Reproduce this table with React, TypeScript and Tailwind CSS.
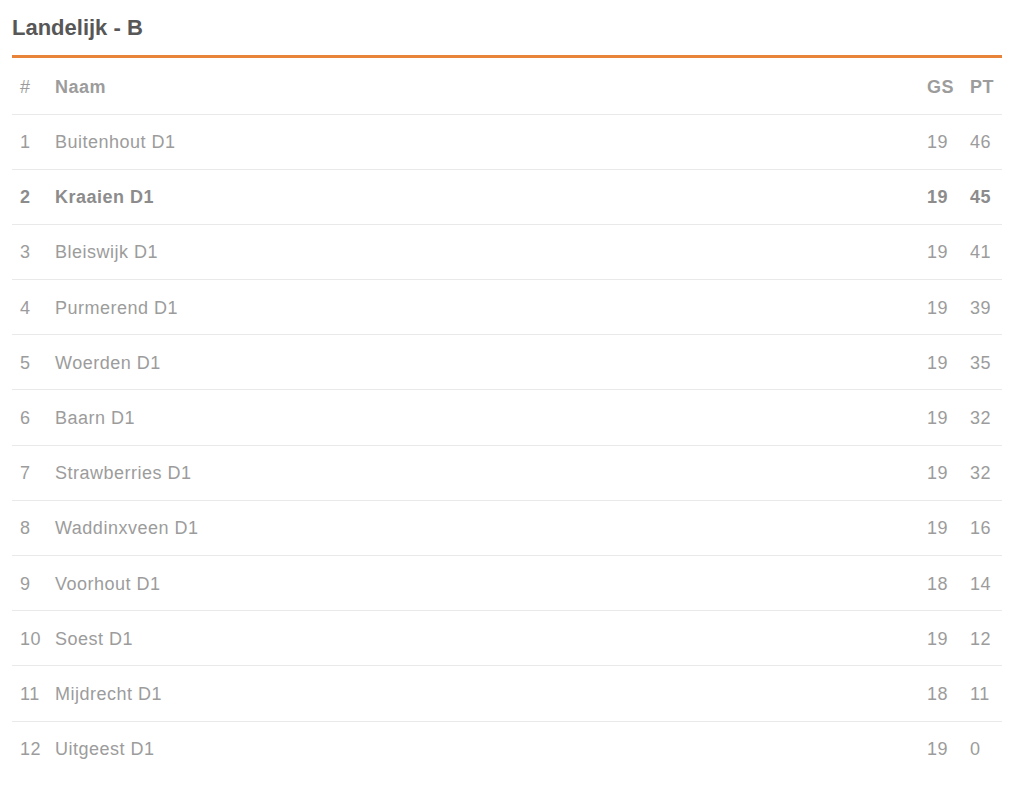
type Team = {
  pos: number;
  name: string;
  gs: number;
  pt: number;
  own?: boolean;
};

const teams: Team[] = [
  { pos: 1, name: "Buitenhout D1", gs: 19, pt: 46 },
  { pos: 2, name: "Kraaien D1", gs: 19, pt: 45, own: true },
  { pos: 3, name: "Bleiswijk D1", gs: 19, pt: 41 },
  { pos: 4, name: "Purmerend D1", gs: 19, pt: 39 },
  { pos: 5, name: "Woerden D1", gs: 19, pt: 35 },
  { pos: 6, name: "Baarn D1", gs: 19, pt: 32 },
  { pos: 7, name: "Strawberries D1", gs: 19, pt: 32 },
  { pos: 8, name: "Waddinxveen D1", gs: 19, pt: 16 },
  { pos: 9, name: "Voorhout D1", gs: 18, pt: 14 },
  { pos: 10, name: "Soest D1", gs: 19, pt: 12 },
  { pos: 11, name: "Mijdrecht D1", gs: 18, pt: 11 },
  { pos: 12, name: "Uitgeest D1", gs: 19, pt: 0 },
];

const App = () => {
  return (
    <div className="min-h-[795px] bg-white font-['Liberation_Sans',Arial,sans-serif]">
      <div className="ml-[12px] w-[990px]">
        {/* Titel */}
        <h2 className="pt-[14px] pb-[13px] text-[22px] leading-[28px] font-bold text-[#575757] border-b-[3px] border-[#e8833a]">
          Landelijk - B
        </h2>

        {/* Stand */}
        <table className="w-full border-collapse text-[18px] tracking-[0.5px] text-[#9c9c9c]">
          <thead>
            <tr className="h-[56px] border-b border-[#e9e9e9]">
              <th className="w-[33px] pl-[8px] pr-[6px] pt-[4px] text-left font-normal">#</th>
              <th className="px-[8px] pt-[4px] text-left font-bold">Naam</th>
              <th className="w-[42px] px-[8px] pt-[4px] text-left font-bold">GS</th>
              <th className="w-[40px] px-[8px] pt-[4px] text-left font-bold">PT</th>
            </tr>
          </thead>
          <tbody>
            {teams.map((t, i) => (
              <tr
                key={t.pos}
                className={`h-[55.2px] ${i < teams.length - 1 ? "border-b border-[#e9e9e9]" : ""} ${
                  t.own ? "font-bold text-[#8c8c8c]" : ""
                }`}
              >
                <td className="pl-[8px] pr-[6px] pt-[2px]">{t.pos}</td>
                <td className="px-[8px] pt-[2px]">{t.name}</td>
                <td className="px-[8px] pt-[2px]">{t.gs}</td>
                <td className="px-[8px] pt-[2px]">{t.pt}</td>
              </tr>
            ))}
          </tbody>
        </table>
      </div>
    </div>
  );
};

export default App;
